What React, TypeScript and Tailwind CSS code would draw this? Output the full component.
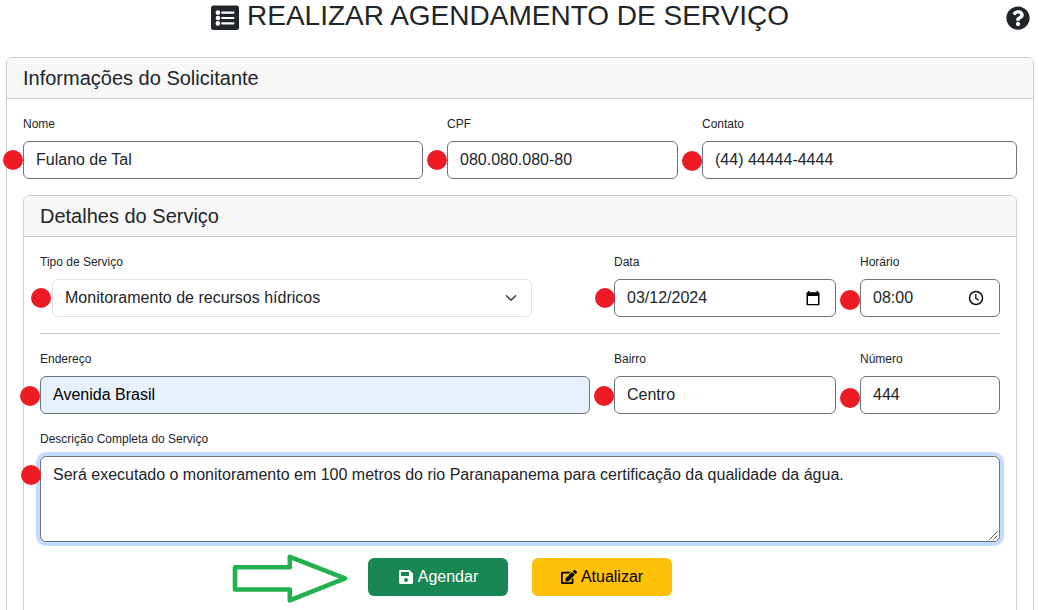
import type { ReactNode } from "react";
import { FaEdit, FaQuestionCircle, FaSave } from "react-icons/fa";

const inputBase =
  "relative flex h-[38px] items-center rounded-md border px-3 text-base leading-6";

function Dot({ place }: { place: string }) {
  return <span className={`absolute z-10 size-5 rounded-full bg-[#ed1c24] ${place}`} />;
}

type FieldProps = {
  label: string;
  value: string;
  width: string;
  dot: string;
  tone?: string;
  icon?: ReactNode;
};

function Field({ label, value, width, dot, tone, icon }: FieldProps) {
  return (
    <div className={width}>
      <div className="mb-2 text-xs leading-[18px]">{label}</div>
      <div className={`${inputBase} ${tone ?? "border-[#6c757d] bg-white"}`}>
        <Dot place={dot} />
        <span className="grow pb-px">{value}</span>
        {icon}
      </div>
    </div>
  );
}

function ListIcon() {
  return (
    <svg width="28" height="25" viewBox="0 0 28 25">
      <rect y=".5" width="28" height="24.5" rx="2.5" fill="#212529" />
      <g fill="#fff">
        <circle cx="6.9" cy="7.6" r="2.3" />
        <circle cx="6.9" cy="13" r="2.3" />
        <circle cx="6.9" cy="18.4" r="2.3" />
        <rect x="10.3" y="6.5" width="13" height="2.2" rx=".4" />
        <rect x="10.3" y="11.9" width="13" height="2.2" rx=".4" />
        <rect x="10.3" y="17.3" width="13" height="2.2" rx=".4" />
      </g>
    </svg>
  );
}

function CalendarIcon() {
  return (
    <svg width="14" height="15" viewBox="0 0 14 15" className="mr-[3px]">
      <path
        d="M2 0h1.5v1.3h7V0H12v1.3h.5c.6 0 1 .4 1 1v11c0 .6-.4 1-1 1h-11c-.6 0-1-.4-1-1v-11c0-.6.4-1 1-1H2V0Zm0 5v7.9h10V5H2Z"
        fill="#000"
        fillRule="evenodd"
      />
    </svg>
  );
}

function ClockIcon() {
  return (
    <svg width="16" height="16" viewBox="0 0 16 16" className="mr-[3.5px]" fill="none" stroke="#111">
      <circle cx="8" cy="8" r="6.5" strokeWidth="1.5" />
      <path d="M7.8 4v4.3l3.2 2" strokeWidth="1.3" />
    </svg>
  );
}

function ChevronIcon() {
  return (
    <svg width="12" height="12" viewBox="0 0 16 16" className="mr-[2px]" fill="none">
      <path d="m2 5 6 6 6-6" stroke="#343a40" strokeWidth="2" strokeLinecap="round" strokeLinejoin="round" />
    </svg>
  );
}

export default function App() {
  return (
    <div className="h-[610px] w-[1039px] overflow-hidden bg-white pr-[5px] pl-[6px] font-['Liberation_Sans',Arial,sans-serif] text-[#212529]">
      <header className="flex h-[57px] items-start">
        <div className="flex grow items-start pl-[205px]">
          <div className="mt-[5px] mr-2">
            <ListIcon />
          </div>
          <h1 className="-mt-px text-[28px] leading-[34px] whitespace-nowrap">
            REALIZAR AGENDAMENTO DE SERVIÇO
          </h1>
        </div>
        <FaQuestionCircle className="mt-[6px] mr-[4px] size-6" />
      </header>

      <section className="h-[600px] rounded-t-md border border-[#cfcfcf]">
        <h2 className="h-[41px] rounded-t-[5px] border-b border-[#cfcfcf] bg-[#f7f7f7] px-4 pt-2 text-xl leading-6">
          Informações do Solicitante
        </h2>
        <div className="px-4 pt-4">
          <div className="flex gap-6">
            <Field label="Nome" value="Fulano de Tal" width="w-[400px]" dot="-left-[21px] top-[8px]" />
            <Field label="CPF" value="080.080.080-80" width="w-[231px]" dot="-left-[21px] top-[8px]" />
            <Field label="Contato" value="(44) 44444-4444" width="w-[315px]" dot="-left-[21px] top-[9px]" />
          </div>

          <section className="mt-4 h-[440px] rounded-t-md border border-[#cfcfcf]">
            <h2 className="h-[41px] rounded-t-[5px] border-b border-[#cfcfcf] bg-[#f7f7f7] px-4 pt-2 text-xl leading-6">
              Detalhes do Serviço
            </h2>
            <div className="px-4 pt-4">
              <div className="flex gap-6">
                <div className="w-[550px]">
                  <div className="mb-2 text-xs leading-[18px]">Tipo de Serviço</div>
                  <div className={`${inputBase} ml-3 w-[480px] border-[#dee2e6] bg-white`}>
                    <Dot place="-left-[22px] top-[8px]" />
                    <span className="grow pb-px">Monitoramento de recursos hídricos</span>
                    <ChevronIcon />
                  </div>
                </div>
                <Field
                  label="Data"
                  value="03/12/2024"
                  width="w-[222px]"
                  dot="-left-[20px] top-[8px]"
                  icon={<CalendarIcon />}
                />
                <Field
                  label="Horário"
                  value="08:00"
                  width="w-[140px]"
                  dot="-left-[21px] top-[10px]"
                  icon={<ClockIcon />}
                />
              </div>

              <hr className="my-4 border-[#c7c8c9]" />

              <div className="flex gap-6">
                <Field
                  label="Endereço"
                  value="Avenida Brasil"
                  width="w-[550px]"
                  dot="-left-[21px] top-[9px]"
                  tone="border-[#6c757d] bg-[#e8f0fe] text-black"
                />
                <Field label="Bairro" value="Centro" width="w-[222px]" dot="-left-[21px] top-[9px]" />
                <Field label="Número" value="444" width="w-[140px]" dot="-left-[21px] top-[11px]" />
              </div>

              <div className="mt-4 mb-2 text-xs leading-[18px]">Descrição Completa do Serviço</div>
              <div className="relative h-[86px] rounded-md border border-[#6c757d] bg-white px-3 py-1.5 text-base leading-6 shadow-[0_0_0_4px_#c2dbfe]">
                <Dot place="-left-[20px] top-[8px]" />
                Será executado o monitoramento em 100 metros do rio Paranapanema para certificação da
                qualidade da água.
                <svg className="absolute right-px bottom-px" width="9" height="9" viewBox="0 0 9 9">
                  <path d="M.5 8.5l8-8M4.5 8.5l4-4" stroke="#555" strokeWidth="1" />
                </svg>
              </div>

              <div className="relative mt-4 flex justify-center gap-6">
                <svg
                  className="absolute top-[-5px] left-[192px]"
                  width="118"
                  height="52"
                  viewBox="232 553 118 52"
                >
                  <path
                    d="M235 567.3h54.8v-10.5L345 578.3l-55.2 22v-10.8H235z"
                    fill="none"
                    stroke="#22b14c"
                    strokeWidth="4.6"
                    strokeLinejoin="round"
                  />
                </svg>
                <button className="flex h-[38px] w-[140px] items-center justify-center gap-1 rounded-md bg-[#198754] text-base leading-6 text-white">
                  <FaSave className="size-4" />
                  <span className="pb-px">Agendar</span>
                </button>
                <button className="flex h-[38px] w-[140px] items-center justify-center gap-1 rounded-md bg-[#ffc107] text-base leading-6 text-black">
                  <FaEdit className="size-4" />
                  <span className="pb-px">Atualizar</span>
                </button>
              </div>
            </div>
          </section>
        </div>
      </section>
    </div>
  );
}
